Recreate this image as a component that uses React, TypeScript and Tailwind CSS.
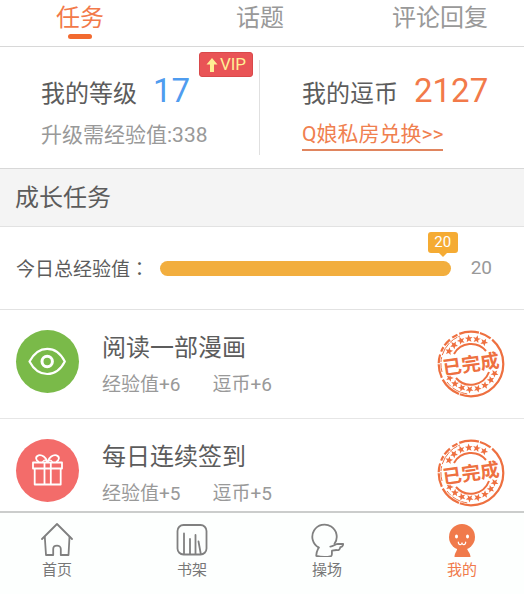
import { useState } from 'react';

type Task = {
  id: number;
  title: string;
  exp: number;
  coins: number;
  icon: 'eye' | 'gift';
};

const tabs = ['任务', '话题', '评论回复'];

const tasks: Task[] = [
  { id: 1, title: '阅读一部漫画', exp: 6, coins: 6, icon: 'eye' },
  { id: 2, title: '每日连续签到', exp: 5, coins: 5, icon: 'gift' },
];

const STAR = 'M0 -4 L1.1 -1.3 L3.9 -1.2 L1.7 0.6 L2.4 3.4 L0 1.8 L-2.4 3.4 L-1.7 0.6 L-3.9 -1.2 L-1.1 -1.3 Z';
const starAngles = [-60, -42, -23, -5, 13, 31, 112, 129, 147, 165, 183, 201, 219, 237];

const EyeIcon = () => (
  <svg viewBox="0 0 63 63" className="size-full" fill="none" stroke="#fff" strokeWidth="2.2" strokeLinejoin="round">
    <path d="M13.5 31.5 C18 23 24 18.8 31.2 18.8 C38.5 18.8 44.5 23 48.8 31.5 C44.5 40 38.5 44 31.2 44 C24 44 18 40 13.5 31.5 Z" />
    <circle cx="31.2" cy="31.5" r="5.2" strokeWidth="3" />
  </svg>
);

const GiftIcon = () => (
  <svg viewBox="0 0 63 63" className="size-full" fill="none" stroke="#fff" strokeWidth="1.8" strokeLinejoin="round">
    <path d="M17 23.5 H46 V29.5 H17 Z" />
    <path d="M18.7 29.5 V45.5 H44.7 V29.5" />
    <path d="M28.5 23.5 V45.5 M34.8 23.5 V45.5" />
    <path d="M31.5 23 C30 18 26 15.5 22.5 16.3 C19 17.5 19.5 21.5 23 23" />
    <path d="M31.5 23 C33 18 37 15.5 40.5 16.3 C44 17.5 43.5 21.5 40 23" />
    <path d="M31.5 23 C30 20.5 28 20.5 26.5 23 M31.5 23 C33 20.5 35 20.5 36.5 23" strokeWidth="1.2" />
  </svg>
);

const DoneStamp = () => (
  <svg viewBox="0 0 70 70" className="size-[70px] shrink-0" role="img" aria-label="已完成">
    <g fill="none" stroke="#ee7040">
      <circle cx="35" cy="35" r="32.3" strokeWidth="2.2" strokeDasharray="62 1 22 2 14 1 9 3 5 2 8 3 6 2 20 1 12 2 30" />
      <path d="M6 43 A30 30 0 0 1 24 7" strokeWidth="1" strokeDasharray="9 1 5 2 14 1" />
      <path d="M11 53 A30 30 0 0 0 32 65" strokeWidth="1" strokeDasharray="6 2 9 1" />
      <path d="M18 25 A19.5 19.5 0 0 1 50 22" strokeWidth="2" />
      <path d="M20 49 A19.5 19.5 0 0 0 53 43" strokeWidth="2" />
    </g>
    <g fill="#ee7040">
      {starAngles.map((angle) => (
        <path key={angle} d={STAR} transform={`rotate(${angle} 35 35) translate(35 9.5)`} />
      ))}
    </g>
    <text
      x="35"
      y="42"
      textAnchor="middle"
      transform="rotate(-8 35 35)"
      fill="#ee7040"
      stroke="#fff"
      strokeWidth="2"
      paintOrder="stroke"
      className="font-['Noto_Sans_CJK_SC',sans-serif] text-[19px] font-bold"
    >
      已完成
    </text>
  </svg>
);

const HomeIcon = () => (
  <svg viewBox="0 0 34 34" className="size-[34px]" fill="none" stroke="#808080" strokeWidth="1.8" strokeLinejoin="round" strokeLinecap="round">
    <path d="M2 16 L17 1 L32 16" />
    <path d="M4.8 14 L6 32 H13.2 V26 C13.2 21.5 20.8 21.5 20.8 26 V32 H28.5 L29.5 14" />
  </svg>
);

const ShelfIcon = () => (
  <svg viewBox="0 0 34 34" className="size-[34px]" fill="none" stroke="#808080" strokeWidth="1.8" strokeLinecap="round">
    <rect x="2.5" y="2" width="29" height="29.5" rx="6" />
    <path d="M9 10.5 V31 M15 16 V31 M20.5 12 V31 M23.5 18.5 L25.8 31" />
  </svg>
);

const PlayIcon = () => (
  <svg viewBox="0 0 34 34" className="size-[34px]" fill="none" stroke="#808080" strokeWidth="1.8" strokeLinejoin="round" strokeLinecap="round">
    <path d="M20.3 23.6 C23.5 23.6 25.5 20.8 28 20.8 L33.2 21 C33 23 32 24 30.3 24.2 C30 26.5 28.5 27.6 26.5 27 L22 27.7 C21.6 29.5 22.5 31.5 21.3 33 C17 34.2 10.5 34 6.3 32.8 C6 29.5 7.5 27 8.7 24.5" />
    <path d="M8.7 24.5 A12.2 12.2 0 1 1 24.5 20.8" />
  </svg>
);

const MineIcon = () => (
  <svg viewBox="0 0 34 34" className="size-[34px]">
    <circle cx="17" cy="14" r="13" fill="#f07a4b" />
    <path d="M12 24 H22 C21.5 27.5 25.5 29.5 25.5 34 H9.5 C9.5 29.5 13 27.5 12 24 Z" fill="#f07a4b" />
    <ellipse cx="11.5" cy="13.5" rx="1.5" ry="2" fill="#fff" />
    <ellipse cx="22.5" cy="13.5" rx="1.5" ry="2" fill="#fff" />
    <path d="M13.3 19 C13.3 22.3 17 22.3 17 19.5 C17 22.3 20.7 22.3 20.7 19" fill="none" stroke="#fff" strokeWidth="1.2" strokeLinecap="round" />
  </svg>
);

const navItems = [
  { label: '首页', Icon: HomeIcon },
  { label: '书架', Icon: ShelfIcon },
  { label: '操场', Icon: PlayIcon },
  { label: '我的', Icon: MineIcon },
];

const TaskRow = ({ task }: { task: Task }) => (
  <li className="flex items-start border-b border-[#e6e6e6] py-[19px] pr-[18px] pl-4">
    <div className={`mt-px size-[63px] shrink-0 rounded-full ${task.icon === 'eye' ? 'bg-[#7aba49]' : 'bg-[#f36c6a]'}`}>
      {task.icon === 'eye' ? <EyeIcon /> : <GiftIcon />}
    </div>
    <div className="ml-[23px] flex-1">
      <h3 className="text-2xl leading-[38px]">{task.title}</h3>
      <p className="flex gap-8 pt-1 text-[19px] leading-7 text-[#999]">
        <span>经验值+{task.exp}</span>
        <span>逗币+{task.coins}</span>
      </p>
    </div>
    <DoneStamp />
  </li>
);

const App = () => {
  const [activeTab, setActiveTab] = useState(0);
  const [activeNav, setActiveNav] = useState(3);

  return (
    <div className="flex h-screen flex-col bg-white font-['Roboto','Noto_Sans_CJK_SC',sans-serif] text-[#5c5c5c]">
      <div className="grid shrink-0 grid-cols-[4fr_5fr_4fr] border-b border-[#d8d8d8] pr-1">
        {tabs.map((tab, i) => (
          <button
            key={tab}
            type="button"
            onClick={() => setActiveTab(i)}
            className={`flex flex-col items-center pt-0.5 pb-[7px] text-2xl leading-8 ${activeTab === i ? 'text-[#f27a4a]' : 'text-[#999]'}`}
          >
            {tab}
            <span className={`h-[5px] w-6 rounded-full ${activeTab === i ? 'bg-[#f26a30]' : ''}`} />
          </button>
        ))}
      </div>

      <main className="min-h-0 flex-1 overflow-hidden">
        <section className="grid grid-cols-2 border-b border-[#d8d8d8] py-[13px] pr-1">
          <div className="relative border-r border-[#e0e0e0] pt-[11px] pb-1 pl-[41px]">
            <div className="flex items-center gap-4">
              <h2 className="pt-1.5 text-2xl">我的等级</h2>
              <span className="text-[33px] leading-10 text-[#4f9cef]">17</span>
            </div>
            <p className="pt-2 text-[21px] leading-8 text-[#999]">升级需经验值:338</p>
            <button type="button" className="absolute -top-2 right-1.5 flex h-[25px] w-[54px] items-center justify-center gap-0.5 rounded-[3px] border border-[#d9494b] bg-[#e95456] text-[17px] leading-none text-[#ffee94]">
              <svg viewBox="0 0 12 16" className="h-4 w-3" fill="#ffee94">
                <path d="M6 1 L11.5 7.5 H8 V15 H4 V7.5 H0.5 Z" />
              </svg>
              VIP
            </button>
          </div>
          <div className="pt-[11px] pl-[42px]">
            <div className="flex items-center gap-4">
              <h2 className="pt-1.5 text-2xl">我的逗币</h2>
              <span className="text-[33px] leading-10 text-[#f27a4a]">2127</span>
            </div>
            <a href="#exchange" className="mt-2 block w-fit border-b-2 border-[#e0855f] text-[21px] leading-[30px] text-[#f0804f]">
              Q娘私房兑换&gt;&gt;
            </a>
          </div>
        </section>

        <h2 className="border-b border-[#e2e2e2] bg-[#f4f4f4] px-[15px] pt-0.5 text-2xl leading-[55px]">成长任务</h2>

        <section className="flex items-center border-b border-[#e2e2e2] py-[27px] pr-8 pl-4">
          <span id="exp-label" className="h-7 w-36 shrink-0 text-[19px] leading-7">
            今日总经验值<span className="font-['Noto_Sans_CJK_TC',sans-serif]">：</span>
          </span>
          <div className="relative flex-1">
            <div role="progressbar" aria-labelledby="exp-label" aria-valuenow={20} aria-valuemax={20} className="h-[15px] rounded-full bg-[#f2ae3e]" />
            <div className="absolute -top-[29px] right-[-7px] flex h-[21px] w-[30px] items-center justify-center rounded-[3px] bg-[#f5ab33] text-[15px] text-white">
              20
              <span className="absolute top-full border-x-4 border-t-4 border-x-transparent border-t-[#f5ab33]" />
            </div>
          </div>
          <span className="ml-5 text-[19px] leading-7 text-[#999]">20</span>
        </section>

        <ul>
          {tasks.map((task) => (
            <TaskRow key={task.id} task={task} />
          ))}
        </ul>
      </main>

      <nav className="flex shrink-0 justify-between border-t-2 border-[#cbcdcc] bg-[#fdfffe] pt-2.5 pr-[45px] pb-[11px] pl-10">
        {navItems.map(({ label, Icon }, i) => (
          <button
            key={label}
            type="button"
            onClick={() => setActiveNav(i)}
            className={`flex w-[34px] flex-col items-center text-[15px] leading-[26px] ${activeNav === i ? 'text-[#f07a4b]' : 'text-[#777]'}`}
          >
            <Icon />
            {label}
          </button>
        ))}
      </nav>
    </div>
  );
};

export default App;
